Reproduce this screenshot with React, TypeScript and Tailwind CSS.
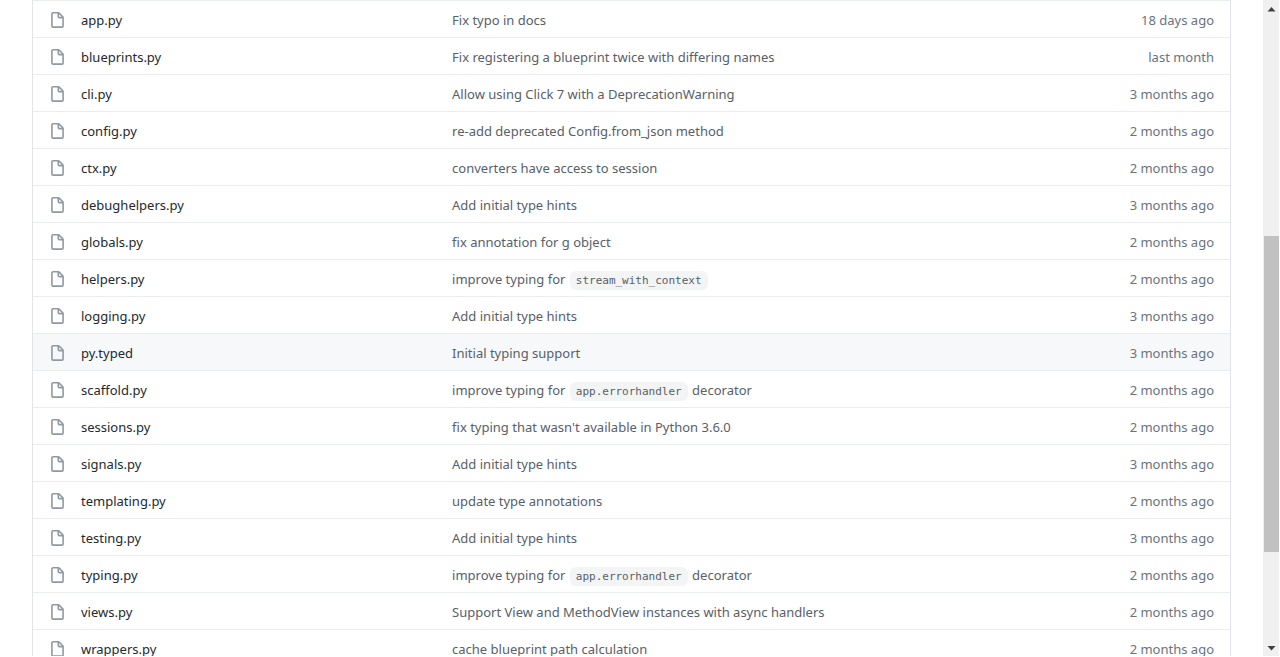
import React from 'react';

type FileEntry = {
  name: string;
  message: React.ReactNode;
  age: string;
  active?: boolean;
};

const Code = ({ children }: { children: React.ReactNode }) => (
  <code className="mx-px rounded-md bg-[#f3f4f4] px-1.5 py-[3px] font-['DejaVu_Sans_Mono',monospace] text-[11px] leading-none">
    {children}
  </code>
);

const files: FileEntry[] = [
  { name: 'app.py', message: 'Fix typo in docs', age: '18 days ago' },
  { name: 'blueprints.py', message: 'Fix registering a blueprint twice with differing names', age: 'last month' },
  { name: 'cli.py', message: 'Allow using Click 7 with a DeprecationWarning', age: '3 months ago' },
  { name: 'config.py', message: 're-add deprecated Config.from_json method', age: '2 months ago' },
  { name: 'ctx.py', message: 'converters have access to session', age: '2 months ago' },
  { name: 'debughelpers.py', message: 'Add initial type hints', age: '3 months ago' },
  { name: 'globals.py', message: 'fix annotation for g object', age: '2 months ago' },
  { name: 'helpers.py', message: <>improve typing for <Code>stream_with_context</Code></>, age: '2 months ago' },
  { name: 'logging.py', message: 'Add initial type hints', age: '3 months ago' },
  { name: 'py.typed', message: 'Initial typing support', age: '3 months ago', active: true },
  { name: 'scaffold.py', message: <>improve typing for <Code>app.errorhandler</Code> decorator</>, age: '2 months ago' },
  { name: 'sessions.py', message: "fix typing that wasn't available in Python 3.6.0", age: '2 months ago' },
  { name: 'signals.py', message: 'Add initial type hints', age: '3 months ago' },
  { name: 'templating.py', message: 'update type annotations', age: '2 months ago' },
  { name: 'testing.py', message: 'Add initial type hints', age: '3 months ago' },
  { name: 'typing.py', message: <>improve typing for <Code>app.errorhandler</Code> decorator</>, age: '2 months ago' },
  { name: 'views.py', message: 'Support View and MethodView instances with async handlers', age: '2 months ago' },
  { name: 'wrappers.py', message: 'cache blueprint path calculation', age: '2 months ago' },
];

const FileIcon = () => (
  <svg viewBox="0 0 16 16" className="block h-[17px] w-[17px] fill-[#8f99a3]" aria-hidden="true">
    <path
      fillRule="evenodd"
      d="M3.75 1.5a.25.25 0 00-.25.25v11.5c0 .138.112.25.25.25h8.5a.25.25 0 00.25-.25V6H9.75A1.75 1.75 0 018 4.25V1.5H3.75zm5.75.56v2.19c0 .138.112.25.25.25h2.19L9.5 2.06zM2 1.75C2 .784 2.784 0 3.75 0h5.086c.464 0 .909.184 1.237.513l3.414 3.414c.329.328.513.773.513 1.237v8.086A1.75 1.75 0 0112.25 15h-8.5A1.75 1.75 0 012 13.25V1.75z"
    />
  </svg>
);

const FileRow = ({ file }: { file: FileEntry }) => (
  <tr className={file.active ? 'h-[37px] border-t border-[#eaecef] bg-[#f6f8fa]' : 'h-[37px] border-t border-[#eaecef]'}>
    <td className="w-12 pt-0.5 pl-4">
      <FileIcon />
    </td>
    <td className="w-[31%] pt-px text-[#24292e]">
      <a href="#" className="hover:underline">{file.name}</a>
    </td>
    <td className="pt-px text-[#586069]">
      <a href="#" className="hover:underline">{file.message}</a>
    </td>
    <td className="w-32 pt-px pr-4 text-right text-[#6a737d]">{file.age}</td>
  </tr>
);

const ScrollBar = () => (
  <div className="mr-px flex w-4 shrink-0 flex-col bg-[#f0f0f0] pt-px" aria-hidden="true">
    <svg viewBox="0 0 16 16" className="h-4 w-4 fill-[#404040]">
      <path d="M4.5 10.5L8.5 6L12.5 10.5z" />
    </svg>
    <div className="grow-[219]" />
    <div className="ml-px grow-[316] bg-[#c1c1c1]" />
    <div className="grow-[88]" />
    <svg viewBox="0 0 16 16" className="h-4 w-4 fill-[#404040]">
      <path d="M4.5 6L8.5 10.5L12.5 6z" />
    </svg>
  </div>
);

export default function App() {
  return (
    <div className="flex h-screen overflow-hidden bg-white pb-px font-['Noto_Sans',sans-serif] text-[13px] leading-5">
      <main className="min-w-0 grow overflow-hidden px-8">
        <div className="border-x border-[#e1e4e8]">
          <table className="w-full table-fixed border-collapse whitespace-nowrap">
            <tbody>
              {files.map(file => (
                <FileRow key={file.name} file={file} />
              ))}
            </tbody>
          </table>
        </div>
      </main>
      <ScrollBar />
    </div>
  );
}
